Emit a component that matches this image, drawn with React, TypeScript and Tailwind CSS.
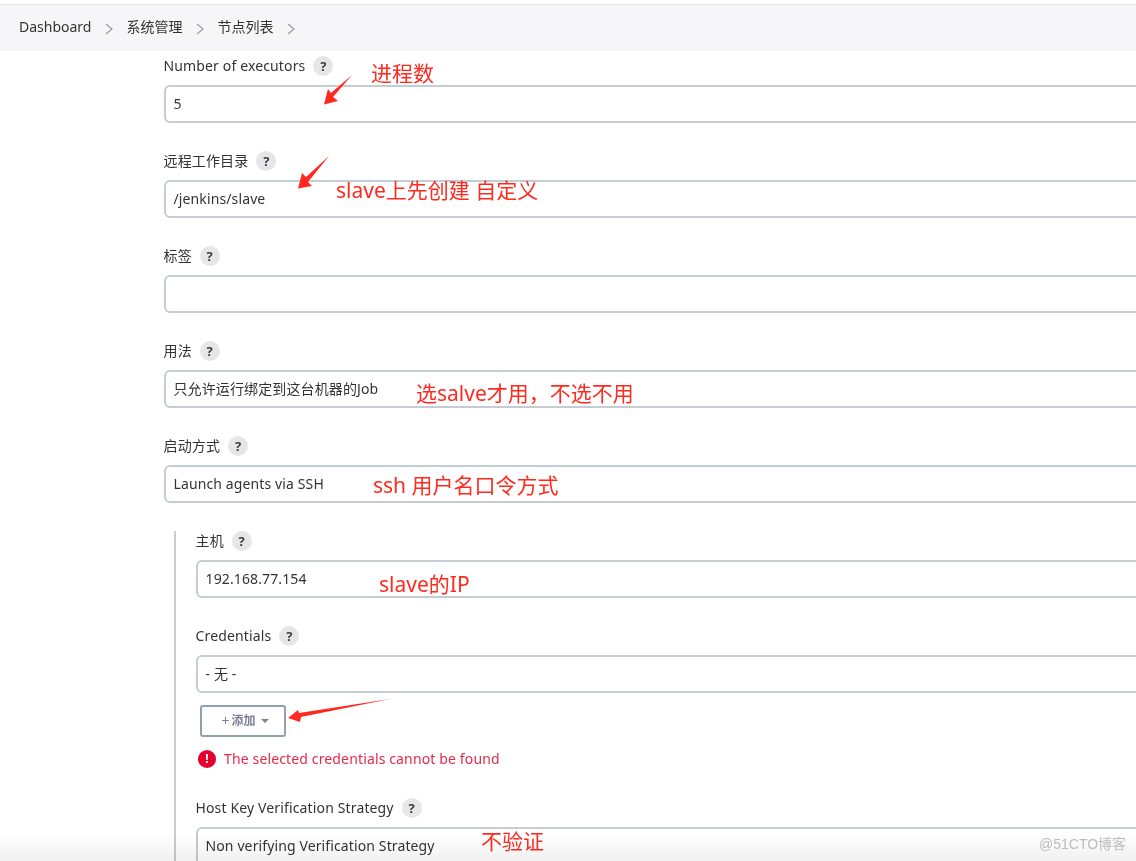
import type { ReactNode } from "react";

const font = "font-['Noto_Sans','Noto_Sans_CJK_SC',sans-serif]";

function Chevron() {
  return (
    <svg width="8" height="12" viewBox="0 0 8 12" fill="none" className="ml-[14px] mr-[13px] mt-1 shrink-0">
      <path d="M1 1l6 5-6 5" stroke="#9a9aa8" strokeWidth="1.2" />
    </svg>
  );
}

function Help() {
  return (
    <span className="ml-2 flex h-5 w-5 items-center justify-center rounded-full bg-[#e6e6e9] text-[13px] font-bold text-[#3c3c3c]">
      ?
    </span>
  );
}

function Field({ label, value }: { label: string; value?: string }) {
  return (
    <div>
      <div className="-ml-[0.5px] flex h-5 items-center text-sm tracking-[0.14px] text-[#333]">
        {label}
        <Help />
      </div>
      <div className="mt-[9px] -mr-5 flex h-[38px] items-center rounded-md border-2 border-[#c3cdd3] bg-white pl-[7.5px] text-sm tracking-[0.12px] text-[#333]">
        {value}
      </div>
    </div>
  );
}

function Note({ className, children }: { className: string; children: ReactNode }) {
  return <span className={`absolute whitespace-nowrap text-[21px] leading-7 text-[#ff2a1f] ${className}`}>{children}</span>;
}

export default function App() {
  return (
    <div className={`relative h-[861px] w-[1136px] overflow-hidden bg-white ${font}`}>
      {/* Breadcrumb */}
      <div className="mt-1 flex h-[47px] items-center border-t border-[#e4e4e8] bg-[#f6f6f9] pb-[2px] pl-[19px] text-sm text-[#333]">
        <span>Dashboard</span>
        <Chevron />
        <span>系统管理</span>
        <Chevron />
        <span>节点列表</span>
        <Chevron />
      </div>

      {/* Form */}
      <div className="flex flex-col gap-7 pl-[164px] pt-[5px]">
        <Field label="Number of executors" value="5" />
        <Field label="远程工作目录" value="/jenkins/slave" />
        <Field label="标签" />
        <Field label="用法" value="只允许运行绑定到这台机器的Job" />
        <Field label="启动方式" value="Launch agents via SSH" />

        <div className="ml-[10px] flex flex-col gap-7 border-l-2 border-[#c3cdd3] pl-5">
          <Field label="主机" value="192.168.77.154" />
          <div>
            <Field label="Credentials" value="- 无 -" />
            <button className="ml-1 mt-3 flex h-8 w-[86px] items-center justify-center rounded-[3px] border-2 border-[#93a1af] bg-white pl-1 text-xs font-bold text-[#7b7f95]">
              <span className="mr-[2px] text-sm font-normal">+</span>添加
              <span className="ml-[5px] h-0 w-0 border-x-4 border-t-4 border-x-transparent border-t-[#7b7f95]" />
            </button>
            <div className="ml-[2px] mt-[13px] flex h-[18px] items-center gap-2 text-sm tracking-[0.14px] text-[#e6294a]">
              <span className="flex h-[18px] w-[18px] items-center justify-center rounded-full bg-[#e6002e] text-xs font-bold text-white">
                !
              </span>
              The selected credentials cannot be found
            </div>
          </div>
          <div className="mt-[2px]">
            <Field label="Host Key Verification Strategy" value="Non verifying Verification Strategy" />
          </div>
        </div>
      </div>

      {/* Bottom fade, multiplied so the text under it stays dark */}
      <div className="pointer-events-none absolute bottom-0 left-0 h-7 w-full bg-gradient-to-b from-white to-[#f1f1f1] mix-blend-multiply" />

      {/* Red annotations drawn over the screenshot */}
      <svg width="1136" height="861" className="pointer-events-none absolute left-0 top-0" fill="#ff2a1f">
        <polygon points="352,75 333,97 338,101 324,104.5 328,89 331,93" />
        <polygon points="329,156 308,182 312,186 298,188.5 302,173 306,177" />
        <polygon points="390,699 301,717 300,722 288,718 298,710 299,713" />
      </svg>
      <Note className="left-[371px] top-[59px]">进程数</Note>
      <Note className="left-[336px] top-[176px]">slave上先创建 自定义</Note>
      <Note className="left-[416px] top-[379px]">选salve才用，不选不用</Note>
      <Note className="left-[373px] top-[471px]">ssh 用户名口令方式</Note>
      <Note className="left-[379px] top-[570px]">slave的IP</Note>
      <Note className="left-[481px] top-[827px]">不验证</Note>
      <span className="absolute left-[1039px] top-[834px] font-['Liberation_Sans','Noto_Sans_CJK_SC',sans-serif] text-sm text-[#bcbcbc]">
        @51CTO博客
      </span>
    </div>
  );
}
